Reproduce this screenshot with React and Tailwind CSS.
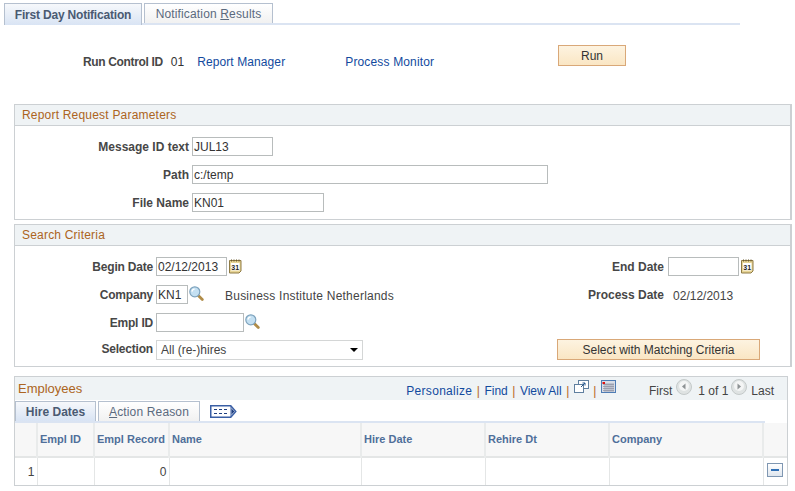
function CalendarIcon() {
    return (
        <svg width="13" height="15" viewBox="0 0 13 15" className="shrink-0">
            <path d="M0.500 1.500h11.500v10.500l-2 2h-9.500z" fill="#e8d596" stroke="#8f7b45" />
            <path d="M2.500 0.500v2M5 0.500v2M7.500 0.500v2M10 0.500v2" stroke="#6b5a2c" />
            <rect x="2" y="4" width="8.500" height="7.500" fill="#fff" />
            <text x="2.300" y="10.500" fontSize="7" fontWeight="700" fill="#222" fontFamily="'Liberation Sans', sans-serif">31</text>
        </svg>
    );
}

function SearchIcon() {
    return (
        <svg width="15" height="15" viewBox="0 0 15 15" className="shrink-0">
            <path d="M9 9.200l4.300 4.300" stroke="#b08c48" strokeWidth="2.800" strokeLinecap="round" />
            <circle cx="5.800" cy="5.800" r="5" fill="#c4e0f2" stroke="#7ea3bd" strokeWidth="1.200" />
            <path d="M3 5.600a2.800 2.800 0 0 1 2.600-2.500" fill="none" stroke="#fff" strokeWidth="1.200" />
        </svg>
    );
}

function NavCircle({ dir }) {
    return (
        <svg width="16" height="16" viewBox="0 0 16 16" className="shrink-0">
            <circle cx="8" cy="8" r="7.500" fill="#dfe3e3" stroke="#c4c9c9" />
            <circle cx="8" cy="7" r="5" fill="#f4f5f5" />
            <path d={dir === 'left' ? 'M9.500 4.500v6l-3.500-3z' : 'M6.500 4.500v6l3.500-3z'} fill="#8d9294" />
        </svg>
    );
}

function Field({ label, children, width = 'w-[141px]', labelClass = 'tracking-[-0.2px]' }) {
    return (
        <div className="flex items-center">
            <span className={`${width} pr-[3px] text-right font-bold text-[#474747] ${labelClass}`}>{label}</span>
            {children}
        </div>
    );
}

function TextBox({ value = '', className = '' }) {
    return (
        <div className={`h-[19px] border border-[#b8bcbc] bg-white pl-[1px] leading-[18px] text-[#333] ${className}`}>{value}</div>
    );
}

function SectionHead({ children }) {
    return (
        <div className="flex h-[21px] items-center border-b border-[#ccd0d3] bg-[#eff3f5] pl-[7px] tracking-[0.2px] text-[#ac6421]">{children}</div>
    );
}

function OrangeButton({ children, className = '' }) {
    return (
        <button type="button" className={`border border-[#d9a878] bg-gradient-to-b from-[#fdf3e0] to-[#fae6c4] text-[#333] ${className}`}>{children}</button>
    );
}

function Sep() {
    return <span className="mx-[4.5px] text-[#b5651d]">|</span>;
}

const columns = [
    { label: '', width: 'w-[22px]' },
    { label: 'Empl ID', width: 'w-[57px]' },
    { label: 'Empl Record', width: 'w-[75px]' },
    { label: 'Name', width: 'w-[192px]' },
    { label: 'Hire Date', width: 'w-[124px]' },
    { label: 'Rehire Dt', width: 'w-[124px]' },
    { label: 'Company', width: 'w-[154px]' },
    { label: '', width: 'w-[24px]' },
];

export default function App() {
    return (
        <div className="h-[491px] w-[795px] overflow-hidden bg-white text-[12px] [font-family:'Liberation_Sans',Arial,sans-serif]">
            {/* page tabs */}
            <div className="ml-[4px] mt-[3px] flex h-[22px] w-[736px] items-stretch gap-[2px] border-b-2 border-[#dbe4f2]">
                <div className="flex h-[22px] w-[138px] items-center justify-center border border-b-0 border-[#b5c0cf] bg-gradient-to-b from-[#f6f8fb] to-[#d9e4f4] font-bold tracking-[-0.2px] text-[#4a5a72]">First Day Notification</div>
                <div className="flex h-[20px] w-[129px] items-center justify-center border border-b-0 border-[#b5c0cf] bg-gradient-to-b from-white to-[#f1f1f1] tracking-[0.15px] text-[#5b6a7e]">
                    <span>Notification <u>R</u>esults</span>
                </div>
            </div>

            {/* run control row */}
            <div className="mt-[20px] flex h-[59px] items-start">
                <div className="mt-[8px] flex w-[558px] shrink-0">
                    <span className="ml-[83px] font-bold tracking-[-0.35px] text-[#474747]">Run Control ID</span>
                    <span className="ml-[8px] text-[#333]">01</span>
                    <a className="ml-[13px] tracking-[0.1px] text-[#124a9e]">Report Manager</a>
                    <a className="ml-[60px] tracking-[0.15px] text-[#124a9e]">Process Monitor</a>
                </div>
                <OrangeButton className="h-[21px] w-[68px]">Run</OrangeButton>
            </div>

            {/* report request parameters */}
            <section className="ml-[14px] h-[116px] w-[778px] border border-r-2 border-[#ccd0d3]">
                <SectionHead>Report Request Parameters</SectionHead>
                <div className="mt-[11px] flex flex-col gap-[9px]">
                    <Field label="Message ID text" width="w-[177px]" labelClass=""><TextBox value="JUL13" className="w-[81px]" /></Field>
                    <Field label="Path" width="w-[177px]" labelClass=""><TextBox value="c:/temp" className="w-[356px]" /></Field>
                    <Field label="File Name" width="w-[177px]" labelClass=""><TextBox value="KN01" className="w-[132px]" /></Field>
                </div>
            </section>

            {/* search criteria */}
            <section className="ml-[14px] mt-[4px] h-[143px] w-[778px] border border-r-2 border-[#ccd0d3]">
                <SectionHead>Search Criteria</SectionHead>
                <div className="mt-[11px] flex flex-col">
                    <div className="flex h-[19px] items-center justify-between">
                        <div className="flex items-center">
                            <Field label="Begin Date"><TextBox value="02/12/2013" className="w-[71px]" /></Field>
                            <span className="ml-[2px]"><CalendarIcon /></span>
                        </div>
                        <div className="mr-[36px] flex items-center">
                            <span className="mr-[4px] font-bold text-[#474747]">End Date</span>
                            <TextBox className="w-[71px]" />
                            <span className="ml-[2px]"><CalendarIcon /></span>
                        </div>
                    </div>
                    <div className="mt-[9px] flex h-[19px] items-center justify-between">
                        <div className="flex items-center">
                            <Field label="Company" labelClass="mt-[1px] tracking-[-0.2px]"><TextBox value="KN1" className="w-[32px]" /></Field>
                            <span className="-mt-[2px] ml-[1px]"><SearchIcon /></span>
                            <span className="ml-[21px] mt-[3px] tracking-[0.23px] text-[#444]">Business Institute Netherlands</span>
                        </div>
                        <div className="mr-[19px] flex w-[183px] items-center">
                            <span className="mt-[1px] font-bold text-[#474747]">Process Date</span>
                            <span className="ml-[9px] mt-[3px] text-[#444]">02/12/2013</span>
                        </div>
                    </div>
                    <div className="mt-[9px] flex h-[19px] items-center">
                        <Field label="Empl ID"><TextBox className="w-[88px]" /></Field>
                        <span className="-mt-[2px] ml-[1px]"><SearchIcon /></span>
                    </div>
                    <div className="mt-[7px] flex h-[21px] items-start justify-between">
                        <div className="mt-[1px]">
                            <Field label="Selection" labelClass="-mt-[3px] tracking-[-0.2px]">
                                <div className="flex h-[20px] w-[207px] items-center justify-between border border-[#d4d6d6] px-[4px] text-[#444]">
                                    <span>All (re-)hires</span>
                                    <span className="h-0 w-0 border-x-[4px] border-t-[4px] border-x-transparent border-t-black" />
                                </div>
                            </Field>
                        </div>
                        <OrangeButton className="mr-[30px] h-[21px] w-[203px]">Select with Matching Criteria</OrangeButton>
                    </div>
                </div>
            </section>

            {/* employees grid */}
            <section className="ml-[14px] mt-[9px] h-[110px] w-[774px] border border-[#ccd0d3]">
                <div className="flex h-[23px] items-center justify-between bg-[#eff3f5] pl-[3px] pr-[13px]">
                    <span className="text-[13px] text-[#ac6421]">Employees</span>
                    <div className="flex items-center pt-[4px] text-[#124a9e]">
                        <a className="tracking-[0.3px]">Personalize</a>
                        <Sep />
                        <a>Find</a>
                        <Sep />
                        <a>View All</a>
                        <Sep />
                        <svg width="15" height="14" viewBox="0 0 15 14" className="-mt-[7px]">
                            <rect x="4.500" y="0.500" width="10" height="8" fill="#fff" stroke="#5f7f9f" />
                            <rect x="0.500" y="4.500" width="9" height="8" fill="#fff" stroke="#5f7f9f" />
                            <path d="M7 7l4-4M8.500 3H11v2.500" fill="none" stroke="#24568c" />
                        </svg>
                        <Sep />
                        <svg width="15" height="13" viewBox="0 0 15 13" className="-mt-[8px]">
                            <rect x="0.500" y="0.500" width="14" height="12" fill="#d9dde6" stroke="#4f7db5" />
                            <path d="M2 4.500h11M2 6.500h11M2 8.500h11M2 10.500h11M4 3v9M6 3v9M8 3v9M10 3v9M12 3v9" stroke="#8b8fa0" strokeWidth="0.700" />
                            <rect x="1.500" y="2" width="2.500" height="2" fill="#e01010" />
                        </svg>
                        <span className="ml-[33px] text-[#444]">First</span>
                        <span className="-mt-[8px] ml-[4px]"><NavCircle dir="left" /></span>
                        <span className="ml-[6px] text-[#444]">1 of 1</span>
                        <span className="-mt-[8px] ml-[3px]"><NavCircle dir="right" /></span>
                        <span className="ml-[4px] text-[#444]">Last</span>
                    </div>
                </div>

                <div className="flex h-[23px] w-[750px] items-start gap-[2px] border-b-2 border-[#dbe4f2]">
                    <div className="mt-[1px] flex h-[20px] w-[81px] items-center justify-center border border-b-0 border-[#b5c0cf] bg-gradient-to-b from-[#f6f8fb] to-[#d9e4f4] font-bold text-[#4a5a72]">Hire Dates</div>
                    <div className="mt-[1px] flex h-[20px] w-[102px] items-center justify-center border border-b-0 border-[#b5c0cf] bg-gradient-to-b from-white to-[#f1f1f1] tracking-[0.15px] text-[#5b6a7e]">
                        <span><u>A</u>ction Reason</span>
                    </div>
                    <svg width="27" height="13" viewBox="0 0 27 13" className="ml-[8px] mt-[5px]">
                        <path d="M0.750 0.750h20l5 5.750-5 5.750h-20z" fill="#fff" stroke="#3a5fa5" strokeWidth="1.500" />
                        <path d="M21 1v11" stroke="#3a5fa5" />
                        <path d="M21.500 3.500l3 3-3 3z" fill="#1f3f80" />
                        <path d="M4 4.500h3M9 4.500h3M14 4.500h3M4 8.500h3M9 8.500h3M14 8.500h3" stroke="#1f3f80" strokeWidth="1.200" />
                    </svg>
                </div>

                <table className="w-[772px] table-fixed border-collapse">
                    <thead>
                        <tr className="h-[34px] border-b-2 border-[#e4e6e6] bg-[#f7f7f7]">
                            {columns.map((col) => (
                                <th key={col.label || col.width} className={`${col.width} whitespace-nowrap border-r-2 border-[#e9ebeb] px-[2px] text-left align-middle text-[11px] font-bold text-[#4f6f9a] last:border-r-0`}>{col.label}</th>
                            ))}
                        </tr>
                    </thead>
                    <tbody>
                        <tr className="h-[28px]">
                            <td className="border-r border-[#e4e6e6] pr-[2px] text-right text-[#444]">1</td>
                            <td className="border-r border-[#e4e6e6]" />
                            <td className="border-r border-[#e4e6e6] pr-[2px] text-right text-[#444]">0</td>
                            <td className="border-r border-[#e4e6e6]" />
                            <td className="border-r border-[#e4e6e6]" />
                            <td className="border-r border-[#e4e6e6]" />
                            <td className="border-r border-[#e4e6e6]" />
                            <td className="pl-[3px]">
                                <div className="mb-[4px] flex h-[14px] w-[16px] items-center justify-center border border-[#7f97b2] bg-gradient-to-b from-white to-[#dfe6ee]">
                                    <span className="h-[2px] w-[8px] bg-[#2f6fb5]" />
                                </div>
                            </td>
                        </tr>
                    </tbody>
                </table>
            </section>
        </div>
    );
}
